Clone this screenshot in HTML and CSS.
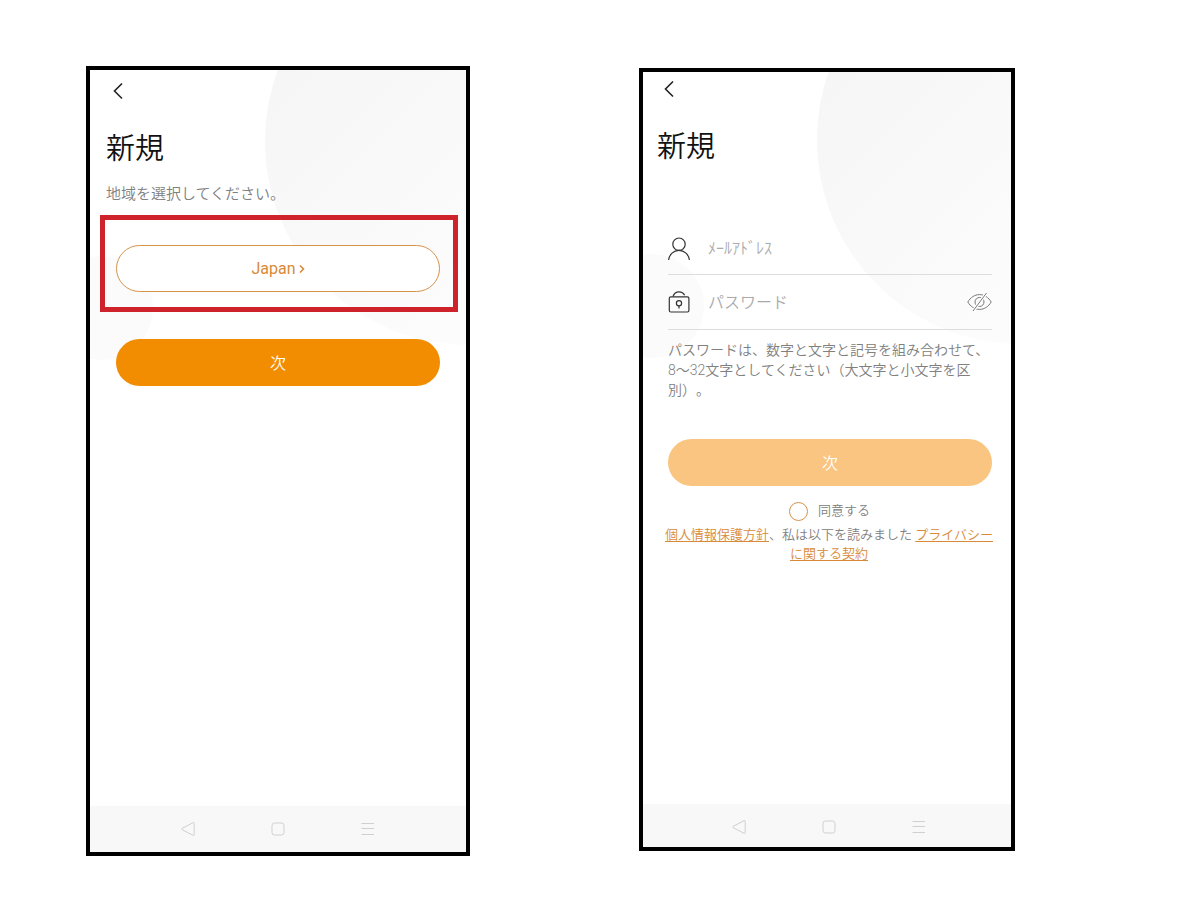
FILE: index.html
```
<!DOCTYPE html>
<html lang="ja">
<head>
<meta charset="utf-8">
<meta name="viewport" content="width=device-width, initial-scale=1">
<title>新規</title>
<link rel="stylesheet" href="styles.css">
</head>
<body>
<main class="board">
  <section class="phone phone-region">
    <svg class="backdrop" width="376" height="300" viewBox="0 0 376 300" aria-hidden="true">
      <defs>
        <linearGradient id="shade" x1="0" y1="0.2" x2="0.6" y2="0.8">
          <stop offset="0" stop-color="#f5f5f5"/>
          <stop offset="1" stop-color="#fcfcfc"/>
        </linearGradient>
      </defs>
      <circle cx="379" cy="71" r="204" fill="url(#shade)"/>
      <circle cx="11" cy="238" r="52" fill="#fbfbfb"/>
    </svg>
    <div class="content">
      <button class="back" type="button" aria-label="戻る">
        <svg width="10" height="18" viewBox="0 0 10 18"><path d="M9 1.5 1.5 9 9 16.5"/></svg>
      </button>
      <h1 class="title">新規</h1>
      <p class="lead">地域を選択してください。</p>
      <div class="highlight">
        <button class="pill pill-outline" type="button">Japan
          <svg width="6" height="10" viewBox="0 0 6 10" aria-hidden="true"><path d="M1 1.5 4.5 5 1 8.5"/></svg>
        </button>
      </div>
      <button class="pill pill-primary" type="button">次</button>
    </div>
    <nav class="system-bar">
      <button type="button" aria-label="戻る"><svg width="16" height="16" viewBox="0 0 16 16"><path d="M13.2 1.6Q14.2 1.2 14.2 2.4V13.6Q14.2 14.8 13.2 14.4L2.2 8.7Q1 8 2.2 7.3Z"/></svg></button>
      <button type="button" aria-label="ホーム"><svg width="16" height="16" viewBox="0 0 16 16"><rect x="2" y="2" width="12" height="12" rx="2.5"/></svg></button>
      <button type="button" aria-label="メニュー"><svg width="16" height="16" viewBox="0 0 16 16"><path d="M1.5 2.5h12.500M1.5 7.5h12.500M1.5 13.500h12.500"/></svg></button>
    </nav>
  </section>

  <section class="phone phone-account">
    <svg class="backdrop" width="368" height="300" viewBox="0 0 368 300" aria-hidden="true">
      <circle cx="378" cy="68" r="204" fill="url(#shade)"/>
      <circle cx="9" cy="234" r="52" fill="#fbfbfb"/>
    </svg>
    <form class="content">
      <button class="back" type="button" aria-label="戻る">
        <svg width="10" height="18" viewBox="0 0 10 18"><path d="M9 1.500 1.500 9 9 16.500"/></svg>
      </button>
      <h1 class="title">新規</h1>
      <div class="fields">
        <div class="field field-mail">
          <label for="mail" aria-label="メールアドレス">
            <svg width="22" height="24" viewBox="0 0 22 24"><circle cx="11" cy="7.200" r="6.200"/><path d="M.6 23C1.300 17.500 5.500 13.400 11 13.400S20.700 17.500 21.400 23"/></svg>
          </label>
          <input id="mail" type="email" placeholder="ﾒｰﾙｱﾄﾞﾚｽ">
        </div>
        <div class="field">
          <label for="pass" aria-label="パスワード">
            <svg width="22" height="24" viewBox="0 0 22 24"><rect x="1.300" y="6.800" width="19.600" height="15.200" rx="1.500"/><path d="M5 6.500C6 3.500 8.200 1.800 11 1.800S15.500 3 16.600 5.200"/><circle cx="11" cy="13.300" r="2.600"/><path d="M11 15.900v2.600"/></svg>
          </label>
          <input id="pass" type="password" placeholder="パスワード">
          <button class="reveal" type="button" aria-label="パスワードを表示">
            <svg width="25" height="20" viewBox="0 0 25 20"><path d="M.8 10C3.500 5.500 7.500 2.600 12.500 2.600S21.500 5.500 24.200 10C21.500 14.500 17.500 17.400 12.500 17.400S3.500 14.500.8 10Z"/><circle cx="12.500" cy="10" r="4.500"/><path d="M19.500 1 6 19" stroke="#fff" stroke-width="3"/><path d="M19.500 1 6 19"/></svg>
          </button>
        </div>
      </div>
      <p class="hint">パスワードは、数字と文字と記号を組み合わせて、8〜32文字としてください（大文字と小文字を区別）。</p>
      <button class="pill pill-primary pill-muted" type="submit" disabled>次</button>
      <label class="agree"><input type="radio" name="agree">同意する</label>
      <p class="terms"><a href="#privacy">個人情報保護方針</a>、私は以下を読みました <a href="#contract">プライバシーに関する契約</a></p>
    </form>
    <nav class="system-bar">
      <button type="button" aria-label="戻る"><svg width="16" height="16" viewBox="0 0 16 16"><path d="M13.200 1.600Q14.200 1.200 14.200 2.400V13.600Q14.200 14.800 13.200 14.400L2.200 8.700Q1 8 2.200 7.300Z"/></svg></button>
      <button type="button" aria-label="ホーム"><svg width="16" height="16" viewBox="0 0 16 16"><rect x="2" y="2" width="12" height="12" rx="2.500"/></svg></button>
      <button type="button" aria-label="メニュー"><svg width="16" height="16" viewBox="0 0 16 16"><path d="M1.500 2.500h12.500M1.500 7.500h12.500M1.500 13.500h12.500"/></svg></button>
    </nav>
  </section>
</main>
</body>
</html>
```
FILE: styles.css
```
* {
  box-sizing: border-box;
}

body {
  margin: 0;
  background: #fff;
  color: #808080;
  font-family: Roboto, "Noto Sans CJK JP", sans-serif;
  font-weight: 350;
  text-spacing-trim: space-all;
}

h1,
p {
  margin: 0;
}

button,
input {
  margin: 0;
  padding: 0;
  border: 0;
  background: none;
  color: inherit;
  font: inherit;
}

svg {
  display: block;
  fill: none;
  stroke: currentColor;
}

.board {
  display: grid;
  grid-template-columns: 384fr 376fr;
  align-items: start;
  gap: 169px;
  padding: 66px 185px 64px 86px;
}

.phone {
  position: relative;
  display: flex;
  flex-direction: column;
  border: 4px solid #000;
  background: #fff;
}

.phone-region {
  min-height: 790px;
}

.phone-account {
  min-height: 783px;
  margin-top: 2px;
}

/* pale circles behind the form */
.backdrop {
  position: absolute;
  top: 0;
  right: 0;
  stroke: none;
}

.content {
  position: relative;
  flex: 1;
  display: flex;
  flex-direction: column;
}

.back {
  align-self: flex-start;
  margin: 12px 0 0 23px;
  color: #222;
  stroke-width: 1.6;
}

.title {
  margin: 27px 16px 0;
  color: #111;
  font-size: 29px;
  font-weight: 350;
  line-height: 44px;
}

.lead {
  margin: 11px 16px 0;
  font-size: 15px;
  line-height: 24px;
}

.highlight {
  margin: 9px 8px 27px 10px;
  padding: 25px 13px 15px 11px;
  border: 5px solid #ce232b;
}

.pill {
  display: flex;
  align-items: center;
  justify-content: center;
  height: 47px;
  border-radius: 24px;
  font-size: 16px;
}

.pill-outline {
  width: 100%;
  gap: 3px;
  border: 1px solid #d5934a;
  background: #fff;
  color: #d98a38;
  font-weight: 400;
}

.pill-outline svg {
  stroke-width: 1.6;
}

.pill-primary {
  margin: 0 26px;
  padding-bottom: 2px;
  background: #f28c00;
  color: #fff;
}

.phone-account .back {
  margin: 8px 0 0 21px;
}

.phone-account .title {
  margin: 27px 14px 51px;
}

.fields {
  margin: 0 19px 0 25px;
}

.field {
  display: flex;
  align-items: center;
  height: 55px;
  border-bottom: 1px solid #ddd;
}

.field-mail {
  padding-top: 3px;
}

.field label {
  color: #333;
  stroke-width: 1.2;
}

.field input {
  flex: 1;
  min-width: 0;
  height: 32px;
  margin-left: 18px;
  font-size: 16px;
}

.field input::placeholder {
  color: #aaa;
}

.reveal {
  color: #777;
}

.hint {
  margin: 10px 19px 39px 25px;
  font-size: 14px;
  line-height: 20px;
}

.pill-muted {
  margin: 0 19px 0 25px;
  background: #f9c581;
}

.agree {
  display: flex;
  align-items: center;
  align-self: center;
  gap: 10px;
  margin: 15px 0 4px 5px;
  font-size: 13px;
  line-height: 20px;
}

.agree input {
  appearance: none;
  width: 19px;
  height: 19px;
  border: 1px solid #d5934a;
  border-radius: 50%;
}

.terms {
  margin: 0 15px 0 19px;
  font-size: 13px;
  line-height: 19px;
  text-align: center;
}

.terms a {
  color: #d98a38;
  text-decoration-thickness: 1px;
  text-underline-offset: 2px;
}

.system-bar {
  position: relative;
  display: flex;
  align-items: center;
  justify-content: center;
  gap: 74px;
  height: 46px;
  background: #f8f8f8;
  color: #d0d0d0;
}

.phone-account .system-bar {
  height: 43px;
  padding: 3px 0 0 4px;
}
```
